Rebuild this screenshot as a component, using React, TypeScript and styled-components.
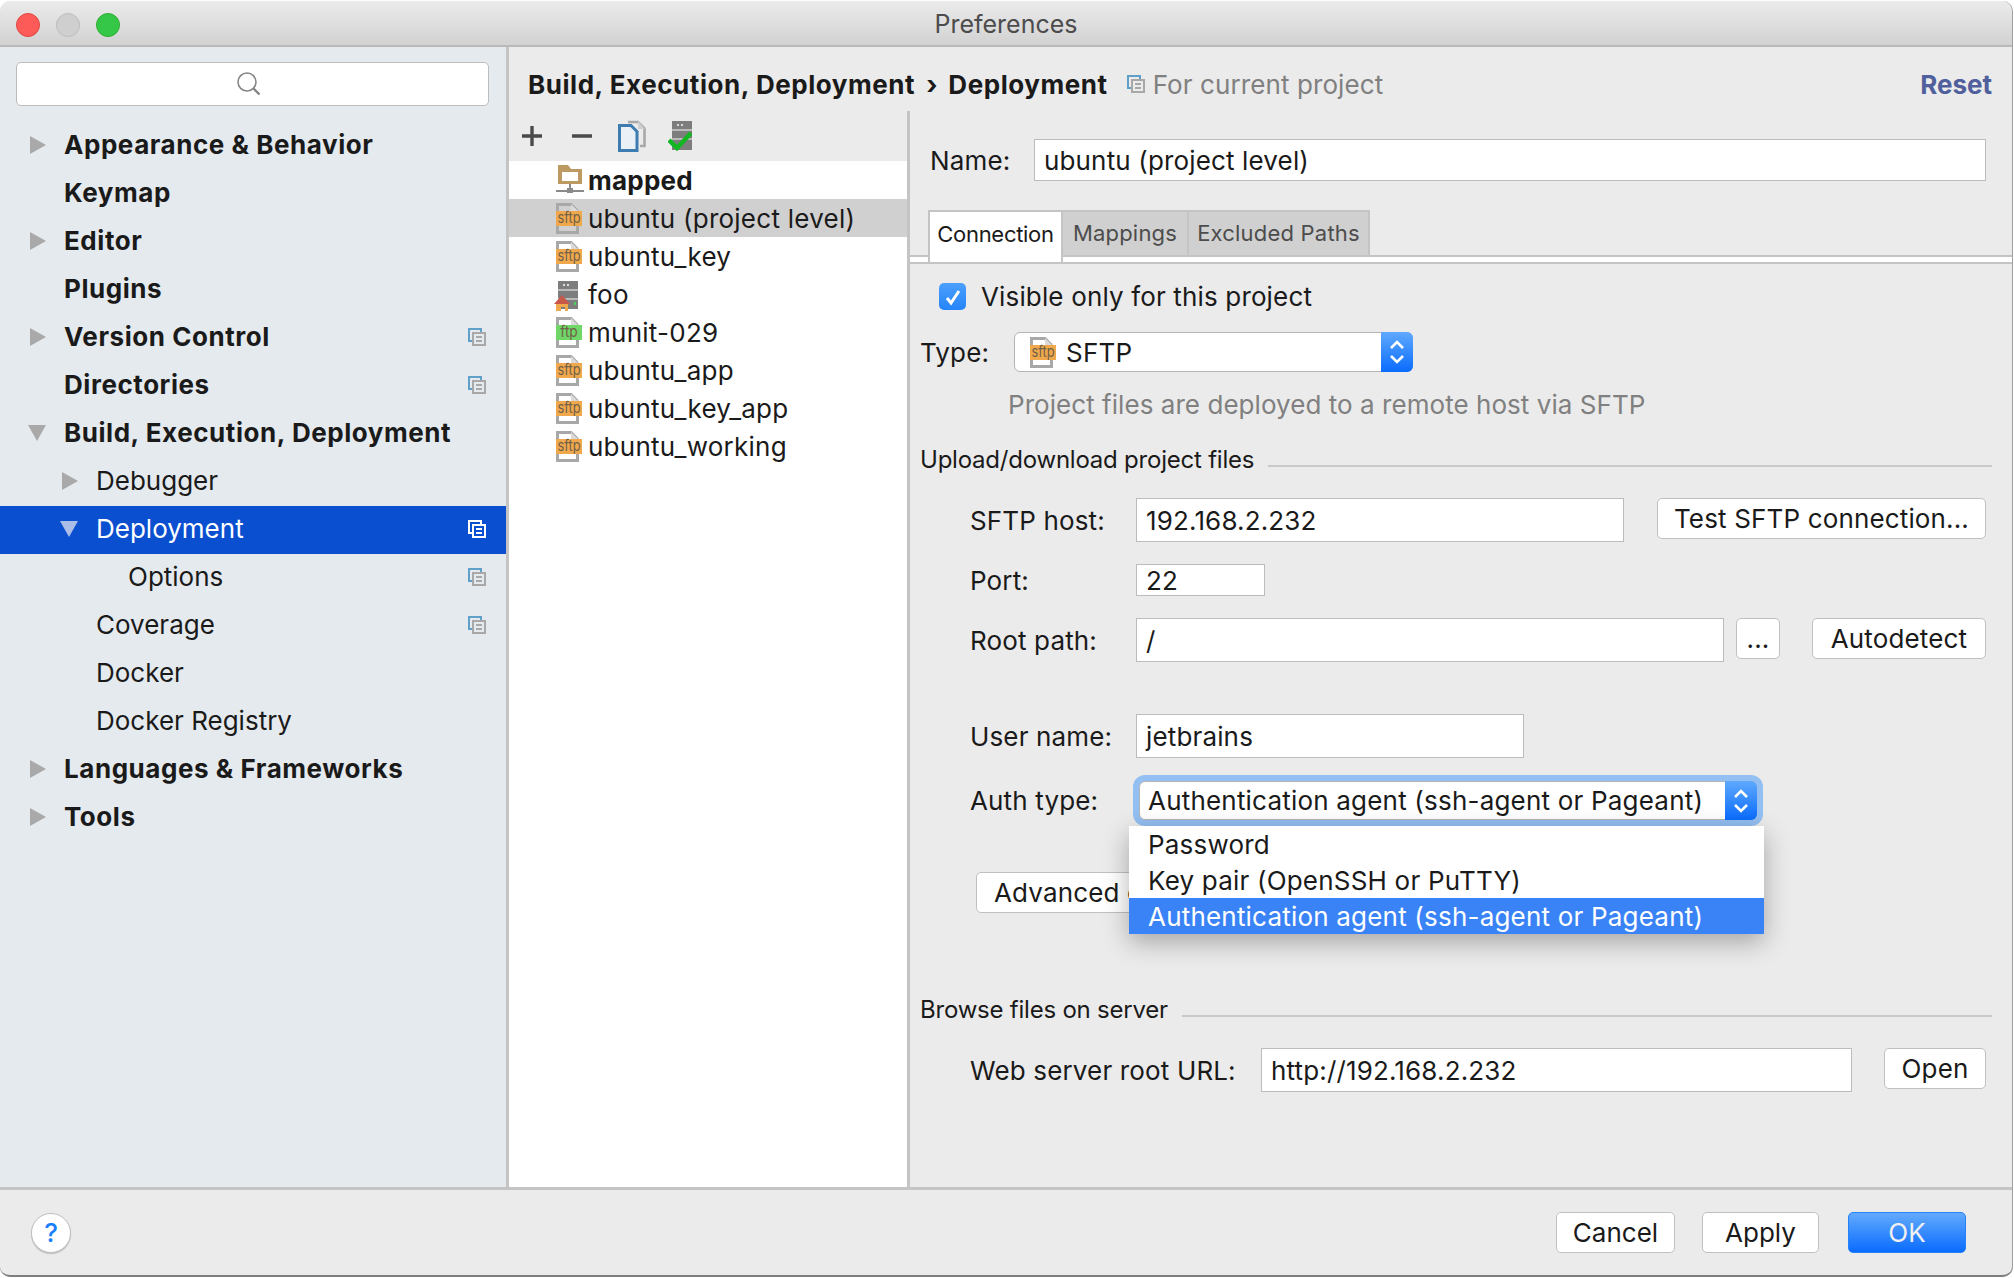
import React from 'react';
import styled, { createGlobalStyle } from 'styled-components';

const GlobalStyle = createGlobalStyle`
  html, body {
    margin: 0;
    padding: 0;
    background: #fff;
  }
  body {
    font-family: Inter, "Noto Sans", "Liberation Sans", sans-serif;
    font-size: 26px;
    color: #1a1a1a;
  }
  * { box-sizing: border-box; }
`;

const Window = styled.div`
  width: 2012px;
  height: 1276px;
  margin-top: 1px;
  display: flex;
  flex-direction: column;
  border-radius: 10px;
  overflow: hidden;
  background: #ebebeb;
  border-bottom: 2px solid #7d7d7d;
  box-shadow: 1px 0 0 #a0a0a0;
`;

const TitleBar = styled.div`
  height: 46px;
  flex: none;
  position: relative;
  display: flex;
  align-items: center;
  justify-content: center;
  padding-top: 2px;
  background: linear-gradient(#ebebeb, #d2d2d2);
  border-bottom: 2px solid #b9b9b9;
  font-size: 25px;
  color: #4c4c4c;
`;

const Lights = styled.div`
  position: absolute;
  left: 16px;
  top: 12px;
  display: flex;
  gap: 16px;
`;

const Light = styled.span<{ $c: string; $b: string }>`
  width: 24px;
  height: 24px;
  border-radius: 50%;
  background: ${p => p.$c};
  border: 1px solid ${p => p.$b};
`;

const Body = styled.div`
  flex: 1;
  display: flex;
  min-height: 0;
`;

const Sidebar = styled.div`
  width: 509px;
  flex: none;
  background: #e5eaee;
  border-right: 3px solid #c4c4c4;
`;

const SearchBox = styled.div`
  width: 473px;
  height: 44px;
  margin: 15px 0 16px 16px;
  padding-right: 8px;
  display: flex;
  align-items: center;
  justify-content: center;
  background: #fff;
  border: 1px solid #bcbcbc;
  border-radius: 5px;
`;

const TreeRow = styled.div<{ $depth: number; $active?: boolean }>`
  height: 48px;
  position: relative;
  display: flex;
  align-items: center;
  padding-left: ${p => 30 + p.$depth * 32}px;
  padding-bottom: 3px;
  background: ${p => (p.$active ? '#0a4fd0' : 'transparent')};
  color: ${p => (p.$active ? '#fff' : '#1a1a1a')};
`;

const TreeArrow = styled.span<{ $kind?: 'open' | 'closed'; $active?: boolean }>`
  width: 34px;
  flex: none;
  display: flex;
  align-items: center;

  &::before {
    content: '';
    display: block;
    ${p =>
      p.$kind === 'open'
        ? `margin-left: -2px;
           border-left: 9px solid transparent;
           border-right: 9px solid transparent;
           border-top: 16px solid ${p.$active ? '#a9bde6' : '#a9a9a9'};`
        : p.$kind === 'closed'
          ? `border-top: 9px solid transparent;
             border-bottom: 9px solid transparent;
             border-left: 16px solid #a9a9a9;`
          : ''}
  }
`;

const TreeLabel = styled.span<{ $bold?: boolean }>`
  font-weight: ${p => (p.$bold ? 700 : 400)};
  letter-spacing: ${p => (p.$bold ? '0.55px' : '0')};
`;

const TreeBadge = styled.span`
  position: absolute;
  right: 20px;
  top: 14px;
  display: flex;
`;

const Main = styled.div`
  flex: 1;
  min-width: 0;
  display: flex;
  flex-direction: column;
`;

const Header = styled.div`
  height: 64px;
  flex: none;
  display: flex;
  align-items: center;
  padding: 10px 20px 0 19px;
`;

const Crumb = styled.span`
  font-weight: 700;
  letter-spacing: 0.55px;
`;

const CrumbSep = styled.span`
  margin: 0 11px;
  font-weight: 700;
`;

const CrumbNote = styled.span`
  display: flex;
  align-items: center;
  gap: 8px;
  margin-left: 19px;
  color: #808080;
  letter-spacing: 0.1px;
`;

const Reset = styled.span`
  margin-left: auto;
  font-weight: 700;
  color: #50609c;
`;

const Split = styled.div`
  flex: 1;
  display: flex;
  min-height: 0;
`;

const Servers = styled.div`
  width: 401px;
  flex: none;
  display: flex;
  flex-direction: column;
  border-right: 3px solid #c4c4c4;
`;

const Toolbar = styled.div`
  height: 50px;
  flex: none;
  display: flex;
  align-items: center;
`;

const ToolSlot = styled.span<{ $left: number }>`
  display: flex;
  margin-left: ${p => p.$left}px;
`;

const ServerList = styled.div`
  flex: 1;
  background: #fff;
`;

const ServerRow = styled.div<{ $selected?: boolean }>`
  height: 38px;
  display: flex;
  align-items: center;
  gap: 4px;
  padding-left: 47px;
  letter-spacing: 0.25px;
  background: ${p => (p.$selected ? '#d0d0d0' : 'transparent')};
`;

const ServerName = styled.span<{ $bold?: boolean }>`
  font-weight: ${p => (p.$bold ? 700 : 400)};
`;

const Details = styled.div`
  flex: 1;
  min-width: 0;
  display: flex;
  flex-direction: column;
  letter-spacing: 0.15px;
`;

const NameRow = styled.div`
  display: flex;
  align-items: center;
  margin: 28px 26px 0 20px;
`;

const NameLabel = styled.span`
  width: 104px;
  flex: none;
`;

const Input = styled.div<{ $w?: number; $h?: number }>`
  ${p => (p.$w ? `width: ${p.$w}px; flex: none;` : 'flex: 1;')}
  height: ${p => p.$h ?? 44}px;
  display: flex;
  align-items: center;
  padding-left: 9px;
  background: #fff;
  border: 1px solid #bcbcbc;
`;

const TabStrip = styled.div`
  height: 54px;
  margin-top: 29px;
  flex: none;
  display: flex;
  align-items: flex-start;
  padding-left: 18px;
  border-bottom: 2px solid #c4c4c4;
  background: linear-gradient(#ebebeb 45px, #c4c4c4 45px, #c4c4c4 47px, #fff 47px);
`;

const Tab = styled.div<{ $w: number; $active?: boolean }>`
  width: ${p => p.$w}px;
  height: ${p => (p.$active ? 52 : 47)}px;
  flex: none;
  display: flex;
  align-items: center;
  justify-content: center;
  font-size: 22px;
  letter-spacing: ${p => (p.$active ? '-0.3px' : '0.2px')};
  background: ${p => (p.$active ? '#fff' : '#d0d0d0')};
  border: 2px solid #c4c4c4;
  border-bottom: ${p => (p.$active ? 'none' : '2px solid #c4c4c4')};
  border-left-width: ${p => (p.$active ? 2 : 0)}px;
  color: ${p => (p.$active ? '#1a1a1a' : '#4c4c4c')};
  padding-bottom: ${p => (p.$active ? 7 : 1)}px;
`;

const Form = styled.div`
  padding: 17px 26px 0 10px;
`;

const CheckRow = styled.div`
  display: flex;
  align-items: center;
  gap: 15px;
  margin-left: 19px;
`;

const CheckBox = styled.span`
  width: 27px;
  height: 27px;
  display: flex;
  align-items: center;
  justify-content: center;
  border-radius: 5px;
  background: linear-gradient(#4da0fb, #2484fa);
`;

const Row = styled.div<{ $top?: number; $indent?: number }>`
  position: relative;
  display: flex;
  align-items: center;
  margin-top: ${p => p.$top ?? 0}px;
  margin-left: ${p => p.$indent ?? 0}px;
`;

const FieldLabel = styled.span<{ $w: number }>`
  width: ${p => p.$w}px;
  flex: none;
`;

const Select = styled.div<{ $w: number; $h: number; $left?: number; $focus?: boolean }>`
  width: ${p => p.$w}px;
  height: ${p => p.$h}px;
  flex: none;
  margin-left: ${p => p.$left ?? 0}px;
  display: flex;
  align-items: center;
  background: #fff;
  border: 1px solid #b5b5b5;
  border-radius: 6px;
  ${p => p.$focus && 'box-shadow: 0 0 0 6px #93bff2;'}
`;

const SelectValue = styled.span<{ $pad: number }>`
  flex: 1;
  min-width: 0;
  display: flex;
  align-items: center;
  gap: 8px;
  padding-left: ${p => p.$pad}px;
  letter-spacing: 0.2px;
`;

const SelectArrows = styled.span<{ $w: number }>`
  width: ${p => p.$w}px;
  height: calc(100% + 2px);
  margin: -1px;
  flex: none;
  display: flex;
  align-items: center;
  justify-content: center;
  border-radius: 0 6px 6px 0;
  background: linear-gradient(#5fa9fd, #0a6cfe);
`;

const Hint = styled.div`
  margin: 17px 0 0 88px;
  color: #808080;
  letter-spacing: 0.05px;
`;

const SectionTitle = styled.div<{ $top: number }>`
  display: flex;
  align-items: center;
  gap: 14px;
  margin: ${p => p.$top}px -6px 0 0;
  font-size: 24px;
  letter-spacing: -0.22px;

  &::after {
    content: '';
    flex: 1;
    height: 2px;
    margin-top: 13px;
    background: #c9c9c9;
  }
`;

const Button = styled.div<{ $w: number; $h?: number; $left?: number; $primary?: boolean }>`
  width: ${p => p.$w}px;
  height: ${p => p.$h ?? 41}px;
  flex: none;
  margin-left: ${p => p.$left ?? 0}px;
  display: flex;
  align-items: center;
  justify-content: center;
  border-radius: 5px;
  border: 1px solid ${p => (p.$primary ? '#2482fb' : '#c0c0c0')};
  background: ${p => (p.$primary ? 'linear-gradient(#62aafc, #0a6cff)' : '#fff')};
  color: ${p => (p.$primary ? '#f0f0f0' : '#1a1a1a')};
`;

const FormButton = styled(Button)`
  align-self: flex-start;
`;

const StartButton = styled(Button)`
  justify-content: flex-start;
  padding-left: 17px;
  white-space: nowrap;
`;

const PopupMenu = styled.div`
  position: absolute;
  left: 159px;
  top: 45px;
  width: 635px;
  background: #fff;
  box-shadow: 0 8px 24px rgba(0, 0, 0, 0.3);
  z-index: 2;
`;

const MenuItem = styled.div<{ $selected?: boolean }>`
  height: 36px;
  display: flex;
  align-items: center;
  padding-left: 19px;
  letter-spacing: 0.2px;
  background: ${p => (p.$selected ? '#3a83f7' : 'transparent')};
  color: ${p => (p.$selected ? '#fff' : '#1a1a1a')};
`;

const Footer = styled.div`
  height: 88px;
  flex: none;
  display: flex;
  align-items: center;
  padding: 0 46px 0 31px;
  border-top: 3px solid #c4c4c4;
`;

const HelpButton = styled.div`
  width: 40px;
  height: 40px;
  display: flex;
  align-items: center;
  justify-content: center;
  border-radius: 50%;
  background: #fff;
  border: 1px solid #c0c0c0;
  box-shadow: 0 1px 1px rgba(0, 0, 0, 0.2);
  color: #1a7ffb;
  font-size: 26px;
  font-weight: 500;
`;

const FooterActions = styled.div`
  margin-left: auto;
  display: flex;
  gap: 27px;
`;

const Chevrons = () => (
  <svg width="20" height="30" viewBox="0 0 20 30" fill="none" stroke="#fff" strokeWidth="2.6">
    <path d="M4 11l6-6 6 6" />
    <path d="M4 19l6 6 6-6" />
  </svg>
);

const ProjectIcon = ({ light }: { light?: boolean }) => (
  <svg width="18" height="18" viewBox="0 0 18 18" fill="none" strokeWidth="2">
    <path d="M4 13H1V1h12v3" stroke={light ? '#fff' : '#5f9fc8'} />
    <rect x="5" y="5" width="12" height="12" stroke={light ? '#fff' : '#a8a8a8'} />
    <path d="M8 9h6M8 13h6" stroke={light ? '#fff' : '#a8a8a8'} />
  </svg>
);

const SearchIcon = () => (
  <svg width="26" height="26" viewBox="0 0 26 26" fill="none" stroke="#858585">
    <circle cx="11" cy="11" r="9" strokeWidth="1.6" />
    <path d="M17.5 17.5l6 6" strokeWidth="2.4" />
  </svg>
);

const ProtoIcon = ({ label, fill }: { label: string; fill: string }) => (
  <svg width="28" height="32" viewBox="0 0 28 32" style={{ flex: 'none' }}>
    <path d="M1.5 9V2.5H15l6 6V10" fill="none" stroke="#a8a8a8" strokeWidth="3" />
    <path d="M15 2v7h7" fill="#dadada" />
    <path d="M1.5 24v6.5h20V24" fill="none" stroke="#a8a8a8" strokeWidth="3" />
    <rect x="0" y="9" width="26" height="15" fill={fill} />
    <text
      x="13"
      y="21"
      fontSize="15"
      textAnchor="middle"
      fill="#70614a"
      fontFamily="Inter, sans-serif"
      textLength={label.length * 5.8}
      lengthAdjust="spacingAndGlyphs"
      letterSpacing="0"
    >
      {label}
    </text>
  </svg>
);

const HostIcon = () => (
  <svg width="30" height="36" viewBox="0 0 30 36" style={{ flex: 'none', marginLeft: -2 }}>
    <rect x="4" y="5" width="20" height="28" fill="#7d7d7d" />
    <path d="M4 14h20M4 23h20" stroke="#b9b9b9" strokeWidth="2" />
    <path d="M9 9h8" stroke="#ddd" strokeWidth="2" strokeDasharray="2 2" />
    <rect x="20" y="26" width="2" height="3" fill="#4cd05c" />
    <path d="M0 28l8-9 8 9z" fill="#c8584a" />
    <path d="M2 28h12v7h-3v-4H7v4H2z" fill="#f0a84c" />
  </svg>
);

const MappedIcon = () => (
  <svg width="28" height="32" viewBox="0 0 28 32" style={{ flex: 'none' }}>
    <path d="M2 1h10l3 4h11v15H2z" fill="#bd9a62" />
    <rect x="6" y="8" width="16" height="9" fill="#fff" />
    <path d="M14 20v6M-2 27h30" stroke="#8a8a8a" strokeWidth="2" />
    <rect x="11" y="24" width="6" height="5" fill="#8a8a8a" />
  </svg>
);

const CopyIcon = () => (
  <svg width="28" height="32" viewBox="0 0 28 32" fill="none">
    <path d="M10 2h10l6.5 6.5V26H22" stroke="#a8a8a8" strokeWidth="2.6" />
    <path d="M20 1v8h7" fill="#cfcfcf" />
    <path d="M1.5 5.5H13l6 6V30.5H1.5z" fill="#eaf1f6" stroke="#3d7cb0" strokeWidth="3" />
  </svg>
);

const CheckServerIcon = () => (
  <svg width="24" height="32" viewBox="0 0 24 32">
    <rect x="4" y="1" width="20" height="29" fill="#7d7d7d" />
    <path d="M4 10h20M4 19h20" stroke="#b9b9b9" strokeWidth="2" />
    <path d="M9 5h8" stroke="#ddd" strokeWidth="2" strokeDasharray="2 2" />
    <path d="M1 20l8 8L23 13" fill="none" stroke="#12b522" strokeWidth="4.5" />
  </svg>
);

type TreeItem = {
  label: string;
  depth: number;
  bold?: boolean;
  arrow?: 'open' | 'closed';
  badge?: boolean;
  active?: boolean;
};

const tree: TreeItem[] = [
  { label: 'Appearance & Behavior', depth: 0, bold: true, arrow: 'closed' },
  { label: 'Keymap', depth: 0, bold: true },
  { label: 'Editor', depth: 0, bold: true, arrow: 'closed' },
  { label: 'Plugins', depth: 0, bold: true },
  { label: 'Version Control', depth: 0, bold: true, arrow: 'closed', badge: true },
  { label: 'Directories', depth: 0, bold: true, badge: true },
  { label: 'Build, Execution, Deployment', depth: 0, bold: true, arrow: 'open' },
  { label: 'Debugger', depth: 1, arrow: 'closed' },
  { label: 'Deployment', depth: 1, arrow: 'open', badge: true, active: true },
  { label: 'Options', depth: 2, badge: true },
  { label: 'Coverage', depth: 1, badge: true },
  { label: 'Docker', depth: 1 },
  { label: 'Docker Registry', depth: 1 },
  { label: 'Languages & Frameworks', depth: 0, bold: true, arrow: 'closed' },
  { label: 'Tools', depth: 0, bold: true, arrow: 'closed' },
];

const servers = [
  { name: 'ubuntu (project level)', kind: 'sftp', selected: true },
  { name: 'ubuntu_key', kind: 'sftp' },
  { name: 'foo', kind: 'host' },
  { name: 'munit-029', kind: 'ftp' },
  { name: 'ubuntu_app', kind: 'sftp' },
  { name: 'ubuntu_key_app', kind: 'sftp' },
  { name: 'ubuntu_working', kind: 'sftp' },
];

const App = () => {
  return (
    <>
      <GlobalStyle />
      <Window>
        <TitleBar>
          <Lights>
            <Light $c="#fc5b57" $b="#e2463f" />
            <Light $c="#cfcfcf" $b="#bcbcbc" />
            <Light $c="#35c748" $b="#2dac2f" />
          </Lights>
          Preferences
        </TitleBar>
        <Body>
          <Sidebar>
            <SearchBox>
              <SearchIcon />
            </SearchBox>
            {tree.map(item => (
              <TreeRow key={item.label} $depth={item.depth} $active={item.active}>
                <TreeArrow $kind={item.arrow} $active={item.active} />
                <TreeLabel $bold={item.bold}>{item.label}</TreeLabel>
                {item.badge && (
                  <TreeBadge>
                    <ProjectIcon light={item.active} />
                  </TreeBadge>
                )}
              </TreeRow>
            ))}
          </Sidebar>
          <Main>
            <Header>
              <Crumb>Build, Execution, Deployment</Crumb>
              <CrumbSep>›</CrumbSep>
              <Crumb>Deployment</Crumb>
              <CrumbNote>
                <ProjectIcon />
                For current project
              </CrumbNote>
              <Reset>Reset</Reset>
            </Header>
            <Split>
              <Servers>
                <Toolbar>
                  <ToolSlot $left={13}>
                    <svg width="20" height="20" viewBox="0 0 20 20" stroke="#4a4a4a" strokeWidth="3.4">
                      <path d="M10 0v20M0 10h20" />
                    </svg>
                  </ToolSlot>
                  <ToolSlot $left={30}>
                    <svg width="20" height="20" viewBox="0 0 20 20" stroke="#4a4a4a" strokeWidth="3.4">
                      <path d="M0 10h20" />
                    </svg>
                  </ToolSlot>
                  <ToolSlot $left={26}>
                    <CopyIcon />
                  </ToolSlot>
                  <ToolSlot $left={22}>
                    <CheckServerIcon />
                  </ToolSlot>
                </Toolbar>
                <ServerList>
                  <ServerRow>
                    <MappedIcon />
                    <ServerName $bold>mapped</ServerName>
                  </ServerRow>
                  {servers.map(s => (
                    <ServerRow key={s.name} $selected={s.selected}>
                      {s.kind === 'sftp' && <ProtoIcon label="sftp" fill="#f0a84c" />}
                      {s.kind === 'ftp' && <ProtoIcon label="ftp" fill="#6fd667" />}
                      {s.kind === 'host' && <HostIcon />}
                      <ServerName>{s.name}</ServerName>
                    </ServerRow>
                  ))}
                </ServerList>
              </Servers>
              <Details>
                <NameRow>
                  <NameLabel>Name:</NameLabel>
                  <Input $h={42}>ubuntu (project level)</Input>
                </NameRow>
                <TabStrip>
                  <Tab $w={135} $active>Connection</Tab>
                  <Tab $w={126}>Mappings</Tab>
                  <Tab $w={181}>Excluded Paths</Tab>
                </TabStrip>
                <Form>
                  <CheckRow>
                    <CheckBox>
                      <svg width="18" height="18" viewBox="0 0 18 18" fill="none" stroke="#fff" strokeWidth="3">
                        <path d="M3 10l4 5 8-12" />
                      </svg>
                    </CheckBox>
                    Visible only for this project
                  </CheckRow>
                  <Row $top={20}>
                    <FieldLabel $w={94}>Type:</FieldLabel>
                    <Select $w={399} $h={40}>
                      <SelectValue $pad={15}>
                        <ProtoIcon label="sftp" fill="#f0a84c" />
                        SFTP
                      </SelectValue>
                      <SelectArrows $w={32}>
                        <Chevrons />
                      </SelectArrows>
                    </Select>
                  </Row>
                  <Hint>Project files are deployed to a remote host via SFTP</Hint>
                  <SectionTitle $top={25}>Upload/download project files</SectionTitle>
                  <Row $top={24} $indent={50}>
                    <FieldLabel $w={166}>SFTP host:</FieldLabel>
                    <Input $w={488}>192.168.2.232</Input>
                    <FormButton $w={329} $left={33}>Test SFTP connection...</FormButton>
                  </Row>
                  <Row $top={22} $indent={50}>
                    <FieldLabel $w={166}>Port:</FieldLabel>
                    <Input $w={129} $h={32}>22</Input>
                  </Row>
                  <Row $top={22} $indent={50}>
                    <FieldLabel $w={166}>Root path:</FieldLabel>
                    <Input $w={588}>/</Input>
                    <FormButton $w={44} $left={12}>...</FormButton>
                    <FormButton $w={174} $left={32}>Autodetect</FormButton>
                  </Row>
                  <Row $top={52} $indent={50}>
                    <FieldLabel $w={166}>User name:</FieldLabel>
                    <Input $w={388}>jetbrains</Input>
                  </Row>
                  <Row $top={23} $indent={50}>
                    <FieldLabel $w={166}>Auth type:</FieldLabel>
                    <Select $w={618} $h={39} $left={3} $focus>
                      <SelectValue $pad={8}>Authentication agent (ssh-agent or Pageant)</SelectValue>
                      <SelectArrows $w={32}>
                        <Chevrons />
                      </SelectArrows>
                    </Select>
                    <PopupMenu>
                      <MenuItem>Password</MenuItem>
                      <MenuItem>Key pair (OpenSSH or PuTTY)</MenuItem>
                      <MenuItem $selected>Authentication agent (ssh-agent or Pageant)</MenuItem>
                    </PopupMenu>
                  </Row>
                  <Row $top={52} $indent={56}>
                    <StartButton $w={260}>Advanced options...</StartButton>
                  </Row>
                  <SectionTitle $top={82}>Browse files on server</SectionTitle>
                  <Row $top={24} $indent={50}>
                    <FieldLabel $w={291}>Web server root URL:</FieldLabel>
                    <Input $w={591}>http://192.168.2.232</Input>
                    <FormButton $w={102} $left={32}>Open</FormButton>
                  </Row>
                </Form>
              </Details>
            </Split>
          </Main>
        </Body>
        <Footer>
          <HelpButton>?</HelpButton>
          <FooterActions>
            <Button $w={119}>Cancel</Button>
            <Button $w={117}>Apply</Button>
            <Button $w={118} $primary $left={2}>OK</Button>
          </FooterActions>
        </Footer>
      </Window>
    </>
  );
};

export default App;
